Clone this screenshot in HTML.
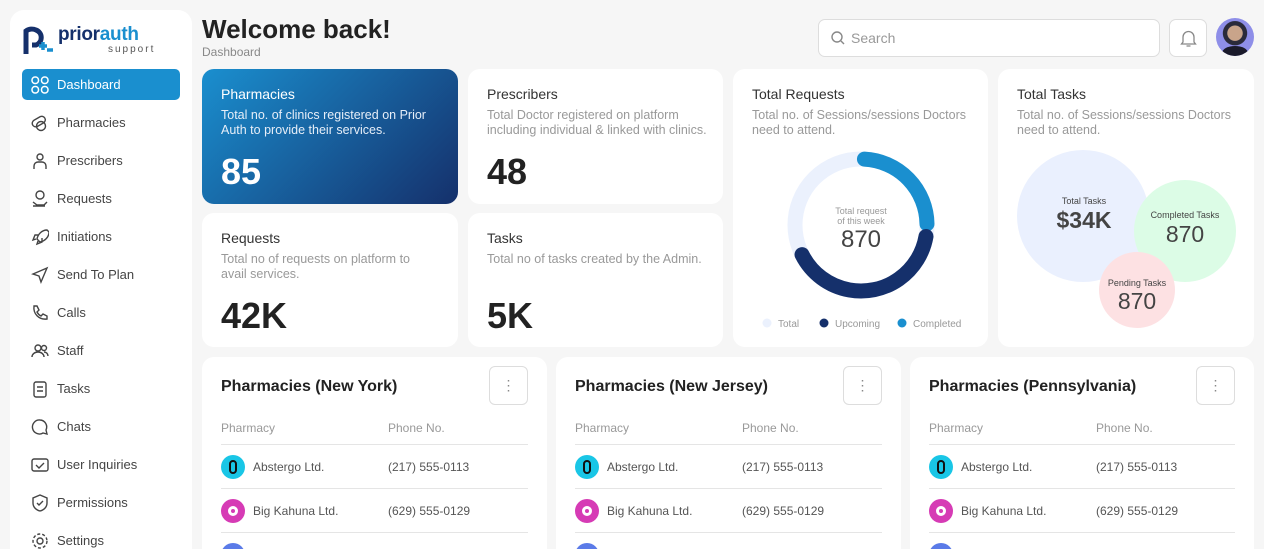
<!DOCTYPE html>
<html><head><meta charset="utf-8"><style>
*{box-sizing:border-box;margin:0;padding:0}
html,body{width:1264px;height:549px;overflow:hidden}
body{background:#f6f6f6;font-family:"Liberation Sans",sans-serif;position:relative;color:#222}
.side{position:absolute;left:10px;top:10px;width:182px;height:560px;background:#fff;border-radius:14px}
.nav{position:absolute;left:12px;width:158px;height:31px;display:flex;align-items:center;font-size:13px;color:#444}
.nav svg{margin-left:9px;margin-right:8px}
.nav.act{background:#1a8fcf;color:#fff;border-radius:5px}
.card{position:absolute;background:#fff;border-radius:12px}
.t{position:absolute;left:19px;top:17px;font-size:14px;color:#333}
.d{position:absolute;left:19px;top:39px;font-size:12.5px;color:#999;line-height:15px;width:205px}
.n{position:absolute;left:19px;font-size:36px;font-weight:bold;color:#222}
.tbl{position:absolute;left:19px;right:19px;top:64px;font-size:12px;color:#555}
.hd{height:24px;color:#999;border-bottom:1px solid #e5e5e5;position:relative}
.row{height:44px;border-bottom:1px solid #e5e5e5;position:relative;display:flex;align-items:center}
.c2{position:absolute;left:167px}
.av{width:24px;height:24px;border-radius:50%;margin-right:8px;display:flex;align-items:center;justify-content:center}
.more{position:absolute;right:19px;top:9px;width:39px;height:39px;border:1px solid #ddd;border-radius:6px;text-align:center;line-height:36px;color:#888;font-size:14px}
.bt{position:absolute;left:19px;top:21px;font-size:16px;font-weight:bold;color:#222}
</style></head><body>
<div class="side">
 <svg style="position:absolute;left:12px;top:16px" width="34" height="30" viewBox="0 0 34 30"><path d="M4 28V5a10 10 0 0 1 10-1a8 8 0 0 1 0 15H10" fill="none" stroke="#15306b" stroke-width="5"/><path d="M17 20h8M21 16v8M25 24h6" stroke="#1a8fcf" stroke-width="3.5"/></svg>
 <div style="position:absolute;left:48px;top:14px;font-size:19px;font-weight:bold;color:#15306b;letter-spacing:-0.3px">prior<span style="color:#1a8fcf">auth</span></div>
 <div style="position:absolute;left:98px;top:34px;font-size:10px;color:#555;letter-spacing:2px">support</div>
 <div class="nav act" style="top:59px"><svg width="18" height="18" viewBox="0 0 18 18" fill="none" stroke="#fff" stroke-width="1.5"><rect x="1" y="1" width="6.5" height="6.5" rx="3"/><rect x="10.5" y="1" width="6.5" height="6.5" rx="3"/><rect x="1" y="10.5" width="6.5" height="6.5" rx="3"/><rect x="10.5" y="10.5" width="6.5" height="6.5" rx="3"/></svg>Dashboard</div>
 <div class="nav" style="top:97px"><svg width="18" height="18" viewBox="0 0 18 18" fill="none" stroke="#444" stroke-width="1.4"><rect x="1" y="4" width="14" height="7" rx="3.5" transform="rotate(-30 8 8)"/><circle cx="10" cy="12" r="4.5"/></svg>Pharmacies</div>
 <div class="nav" style="top:135px"><svg width="18" height="18" viewBox="0 0 18 18" fill="none" stroke="#444" stroke-width="1.4"><circle cx="9" cy="5" r="3"/><path d="M3 17v-3a4 4 0 0 1 4-4h4a4 4 0 0 1 4 4v3"/></svg>Prescribers</div>
 <div class="nav" style="top:173px"><svg width="18" height="18" viewBox="0 0 18 18" fill="none" stroke="#444" stroke-width="1.4"><circle cx="9" cy="5" r="4"/><path d="M2 12l4 3h7l3-3M2 16h12"/></svg>Requests</div>
 <div class="nav" style="top:211px"><svg width="18" height="18" viewBox="0 0 18 18" fill="none" stroke="#444" stroke-width="1.4"><path d="M16 2c-5 0-9 4-10 9l3 3c5-1 9-5 9-10zM5 11l-3 1 2-5h4M7 13l-1 3 5-2v-4"/></svg>Initiations</div>
 <div class="nav" style="top:249px"><svg width="18" height="18" viewBox="0 0 18 18" fill="none" stroke="#444" stroke-width="1.4"><path d="M16 2L2 8l6 2 2 6z"/></svg>Send To Plan</div>
 <div class="nav" style="top:287px"><svg width="18" height="18" viewBox="0 0 18 18" fill="none" stroke="#444" stroke-width="1.4"><path d="M3 2h3l2 4-2 2a9 9 0 0 0 4 4l2-2 4 2v3c-8 1-14-5-13-13z"/></svg>Calls</div>
 <div class="nav" style="top:325px"><svg width="18" height="18" viewBox="0 0 18 18" fill="none" stroke="#444" stroke-width="1.4"><circle cx="7" cy="6" r="3"/><circle cx="13" cy="6" r="2.5"/><path d="M1 15a6 5 0 0 1 12 0M13 10a4 4 0 0 1 4 4"/></svg>Staff</div>
 <div class="nav" style="top:363px"><svg width="18" height="18" viewBox="0 0 18 18" fill="none" stroke="#444" stroke-width="1.4"><rect x="3" y="2" width="12" height="15" rx="2"/><path d="M6 7h6M6 11h6"/></svg>Tasks</div>
 <div class="nav" style="top:401px"><svg width="18" height="18" viewBox="0 0 18 18" fill="none" stroke="#444" stroke-width="1.4"><path d="M9 2a7 7 0 1 0 3 13l4 1-1-4A7 7 0 0 0 9 2z"/></svg>Chats</div>
 <div class="nav" style="top:439px"><svg width="18" height="18" viewBox="0 0 18 18" fill="none" stroke="#444" stroke-width="1.4"><rect x="1" y="3" width="16" height="12" rx="2"/><path d="M5 9l3 3 5-5"/></svg>User Inquiries</div>
 <div class="nav" style="top:477px"><svg width="18" height="18" viewBox="0 0 18 18" fill="none" stroke="#444" stroke-width="1.4"><path d="M9 1l7 3v5c0 4-3 7-7 8-4-1-7-4-7-8V4z"/><path d="M6 9l2 2 4-4"/></svg>Permissions</div>
 <div class="nav" style="top:515px"><svg width="18" height="18" viewBox="0 0 18 18" fill="none" stroke="#444" stroke-width="1.4"><circle cx="9" cy="9" r="3"/><circle cx="9" cy="9" r="7" stroke-dasharray="3 2"/></svg>Settings</div>
</div>

<div style="position:absolute;left:202px;top:14px;font-size:26px;font-weight:bold;color:#222">Welcome back!</div>
<div style="position:absolute;left:202px;top:45px;font-size:12px;color:#888">Dashboard</div>
<div style="position:absolute;left:818px;top:19px;width:342px;height:38px;border:1px solid #ddd;border-radius:7px;background:#fff;font-size:14px;color:#999;line-height:36px;padding-left:32px"><svg style="position:absolute;left:12px;top:11px" width="14" height="14" viewBox="0 0 14 14" fill="none" stroke="#888" stroke-width="1.4"><circle cx="6" cy="6" r="5"/><path d="M10 10l3 3"/></svg>Search</div>
<div style="position:absolute;left:1169px;top:19px;width:38px;height:38px;border:1px solid #ddd;border-radius:7px;background:#fff"><svg style="position:absolute;left:10px;top:9px" width="17" height="19" viewBox="0 0 17 19" fill="none" stroke="#888" stroke-width="1.3"><path d="M3 13V8a5.5 5.5 0 0 1 11 0v5l1.5 2h-14zM6.5 17h4"/></svg></div>
<div style="position:absolute;left:1216px;top:18px;width:38px;height:38px;border-radius:50%;background:radial-gradient(circle at 50% 40%,#c9a48a 0 25%,#2a2a3a 27% 40%,#8e8ee8 42%);overflow:hidden"><div style="position:absolute;left:6px;top:28px;width:26px;height:14px;border-radius:50%;background:#1a1a2a"></div></div>

<div class="card" style="left:202px;top:69px;width:256px;height:135px;background:linear-gradient(135deg,#1a8fcf,#15306b)">
 <div class="t" style="color:#fff">Pharmacies</div><div class="d" style="color:#e6eef8">Total no. of clinics registered on Prior Auth to provide their services.</div><div class="n" style="top:82px;color:#fff">85</div></div>
<div class="card" style="left:468px;top:69px;width:255px;height:135px"><div class="t">Prescribers</div><div class="d" style="width:220px">Total Doctor registered on platform including individual &amp; linked with clinics.</div><div class="n" style="top:82px">48</div></div>
<div class="card" style="left:202px;top:213px;width:256px;height:134px"><div class="t">Requests</div><div class="d">Total no of requests on platform to avail services.</div><div class="n" style="top:82px">42K</div></div>
<div class="card" style="left:468px;top:213px;width:255px;height:134px"><div class="t">Tasks</div><div class="d" style="width:225px">Total no of tasks created by the Admin.</div><div class="n" style="top:82px">5K</div></div>

<div class="card" style="left:733px;top:69px;width:255px;height:278px"><div class="t">Total Requests</div><div class="d" style="width:215px">Total no. of Sessions/sessions Doctors need to attend.</div>
 <svg style="position:absolute;left:0;top:0" width="255" height="278">
  <circle cx="128" cy="156" r="66" fill="none" stroke="#ebf1fd" stroke-width="15"/>
  <circle cx="128" cy="156" r="66" fill="none" stroke="#1a8fcf" stroke-width="15" stroke-linecap="round" stroke-dasharray="99 1000" transform="rotate(-87 128 156)"/>
  <circle cx="128" cy="156" r="66" fill="none" stroke="#15306b" stroke-width="15" stroke-linecap="round" stroke-dasharray="165 1000" transform="rotate(10 128 156)"/>
  <text x="128" y="145" text-anchor="middle" font-size="9" fill="#999" font-family="Liberation Sans">Total request</text>
  <text x="128" y="155" text-anchor="middle" font-size="9" fill="#999" font-family="Liberation Sans">of this week</text>
  <text x="128" y="178" text-anchor="middle" font-size="24" fill="#444" font-family="Liberation Sans">870</text>
  <circle cx="34" cy="254" r="4.5" fill="#ebf1fd"/><text x="45" y="258" font-size="10" fill="#999" font-family="Liberation Sans">Total</text>
  <circle cx="91" cy="254" r="4.5" fill="#15306b"/><text x="102" y="258" font-size="10" fill="#999" font-family="Liberation Sans">Upcoming</text>
  <circle cx="169" cy="254" r="4.5" fill="#1a8fcf"/><text x="180" y="258" font-size="10" fill="#999" font-family="Liberation Sans">Completed</text>
 </svg></div>

<div class="card" style="left:998px;top:69px;width:256px;height:278px"><div class="t">Total Tasks</div><div class="d" style="width:215px">Total no. of Sessions/sessions Doctors need to attend.</div>
 <svg style="position:absolute;left:0;top:0" width="256" height="278" font-family="Liberation Sans">
  <circle cx="85" cy="147" r="66" fill="#eaf0fe"/>
  <circle cx="187" cy="162" r="51" fill="#dcfce6"/>
  <circle cx="139" cy="221" r="38" fill="#fde1e3"/>
  <text x="86" y="135" text-anchor="middle" font-size="9" fill="#444">Total Tasks</text>
  <text x="86" y="159" text-anchor="middle" font-size="23" font-weight="bold" fill="#444">$34K</text>
  <text x="187" y="149" text-anchor="middle" font-size="9" fill="#444">Completed Tasks</text>
  <text x="187" y="173" text-anchor="middle" font-size="23" fill="#444">870</text>
  <text x="139" y="217" text-anchor="middle" font-size="9" fill="#444">Pending Tasks</text>
  <text x="139" y="240" text-anchor="middle" font-size="23" fill="#444">870</text>
 </svg></div>

<div class="card" style="left:202px;top:357px;width:345px;height:220px"><div class="bt">Pharmacies (New York)</div><div class="more">⋮</div>
 <div class="tbl"><div class="hd">Pharmacy<span class="c2">Phone No.</span></div>
 <div class="row"><div class="av" style="background:#19c6e6"><div style="width:8px;height:14px;border:2px solid #111;border-radius:4px"></div></div>Abstergo Ltd.<span class="c2">(217) 555-0113</span></div>
 <div class="row"><div class="av" style="background:#d63bb5"><div style="width:10px;height:10px;border-radius:50%;border:3px solid #fff"></div></div>Big Kahuna Ltd.<span class="c2">(629) 555-0129</span></div>
 <div class="row"><div class="av" style="background:#5b7be8"></div></div></div></div>
<div class="card" style="left:556px;top:357px;width:345px;height:220px"><div class="bt">Pharmacies (New Jersey)</div><div class="more">⋮</div>
 <div class="tbl"><div class="hd">Pharmacy<span class="c2">Phone No.</span></div>
 <div class="row"><div class="av" style="background:#19c6e6"><div style="width:8px;height:14px;border:2px solid #111;border-radius:4px"></div></div>Abstergo Ltd.<span class="c2">(217) 555-0113</span></div>
 <div class="row"><div class="av" style="background:#d63bb5"><div style="width:10px;height:10px;border-radius:50%;border:3px solid #fff"></div></div>Big Kahuna Ltd.<span class="c2">(629) 555-0129</span></div>
 <div class="row"><div class="av" style="background:#5b7be8"></div></div></div></div>
<div class="card" style="left:910px;top:357px;width:344px;height:220px"><div class="bt">Pharmacies (Pennsylvania)</div><div class="more">⋮</div>
 <div class="tbl"><div class="hd">Pharmacy<span class="c2">Phone No.</span></div>
 <div class="row"><div class="av" style="background:#19c6e6"><div style="width:8px;height:14px;border:2px solid #111;border-radius:4px"></div></div>Abstergo Ltd.<span class="c2">(217) 555-0113</span></div>
 <div class="row"><div class="av" style="background:#d63bb5"><div style="width:10px;height:10px;border-radius:50%;border:3px solid #fff"></div></div>Big Kahuna Ltd.<span class="c2">(629) 555-0129</span></div>
 <div class="row"><div class="av" style="background:#5b7be8"></div></div></div></div>
</body></html>
